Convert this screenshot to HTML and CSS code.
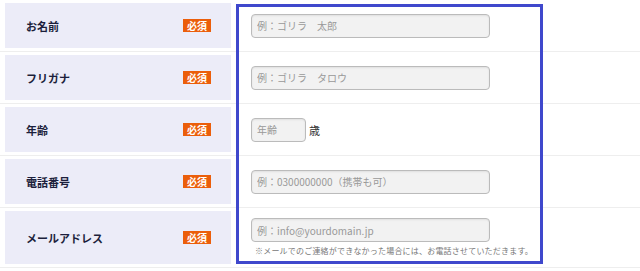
FILE: index.html
```html
<!DOCTYPE html>
<html lang="ja">
<head>
	<meta charset="utf-8" />
	<title>お問い合わせフォーム</title>
	<link rel="stylesheet" href="styles.css">
</head>
<body>
	<div class="form">
		<div class="row">
			<div class="label"><span>お名前</span><em class="req">必須</em></div>
			<div class="field"><input type="text" class="txt" placeholder="例：ゴリラ　太郎"></div>
		</div>
		<div class="row">
			<div class="label"><span>フリガナ</span><em class="req">必須</em></div>
			<div class="field"><input type="text" class="txt" placeholder="例：ゴリラ　タロウ"></div>
		</div>
		<div class="row">
			<div class="label"><span>年齢</span><em class="req">必須</em></div>
			<div class="field"><div class="age"><input type="text" class="txt short" placeholder="年齢"><span>歳</span></div></div>
		</div>
		<div class="row">
			<div class="label"><span>電話番号</span><em class="req">必須</em></div>
			<div class="field"><input type="text" class="txt" placeholder="例：0300000000（携帯も可）"></div>
		</div>
		<div class="row last">
			<div class="label"><span>メールアドレス</span><em class="req">必須</em></div>
			<div class="field">
				<input type="text" class="txt" placeholder="例：info@yourdomain.jp">
				<p class="note">※メールでのご連絡ができなかった場合には、お電話させていただきます。</p>
			</div>
		</div>

		<!-- 注目枠 -->
		<div class="mark"></div>
	</div>
</body>
</html>
```

FILE: styles.css
```css
body {
	margin: 0;
	font-family: "Noto Sans CJK JP", "Noto Sans", sans-serif;
	color: #333;
	background: #fff;
}
.form {
	position: relative;
	width: 640px;
}
.row {
	display: flex;
	padding: 3px 0 3px 5px;
	border-bottom: 1px solid #eeeeee;
}
.label {
	width: 226px;
	min-height: 45px;
	box-sizing: border-box;
	padding: 0 20px 0 21px;
	background-color: #ececf8;
	display: flex;
	align-items: center;
	justify-content: space-between;
}
.label span {
	font-size: 11px;
	font-weight: 700;
	color: #1c1f3c;
}
.req {
	font-style: normal;
	font-size: 10px;
	font-weight: 700;
	line-height: 13px;
	color: #fff;
	background-color: #eb5e0b;
	padding: 0 4px;
}
.field {
	flex: 1;
	padding: 7px 0 7px 20px;
	display: flex;
	flex-direction: column;
	justify-content: center;
}
.txt {
	width: 239px;
	height: 24px;
	box-sizing: border-box;
	border: 1px solid #bbbbbb;
	border-radius: 4px;
	background-color: #f2f2f2;
	box-shadow: inset 0 1px 2px rgba(0,0,0,0.08);
	padding: 0 5px;
	font-family: inherit;
	font-size: 10px;
	color: #333;
}
.txt::placeholder {
	color: #999;
}
.short {
	width: 55px;
}
.age {
	display: flex;
	align-items: center;
	gap: 3px;
	font-size: 11px;
}
.note {
	margin: 3px 0 0 4px;
	font-size: 8px;
	line-height: 12px;
	color: #777;
	letter-spacing: 0.2px;
}
.mark {
	position: absolute;
	left: 236px;
	top: 4px;
	width: 307px;
	height: 260px;
	box-sizing: border-box;
	border: 3px solid #3f48cc;
	pointer-events: none;
}
```
